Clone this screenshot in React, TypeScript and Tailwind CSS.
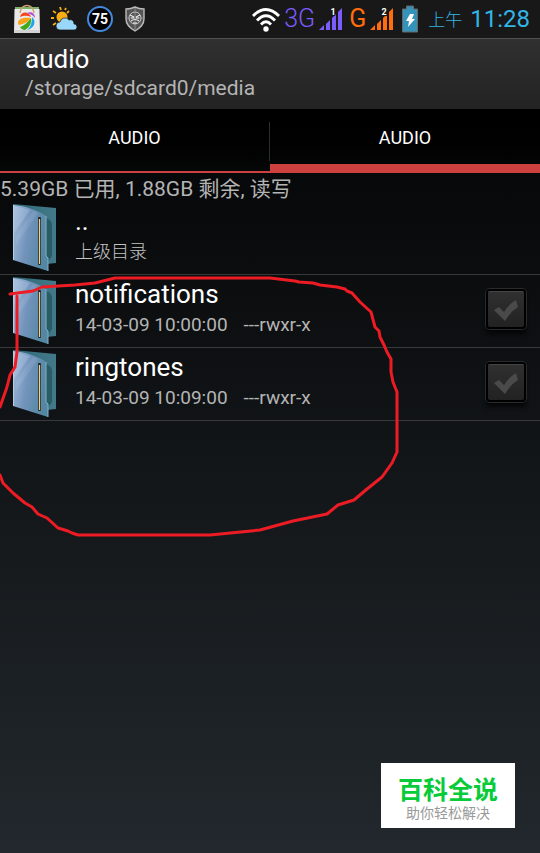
import { useState } from "react";

interface Entry {
	name: string;
	modified: string;
	permissions: string;
}

const entries: Entry[] = [
	{
		name: "notifications",
		modified: "14-03-09 10:00:00",
		permissions: "---rwxr-x",
	},
	{
		name: "ringtones",
		modified: "14-03-09 10:09:00",
		permissions: "---rwxr-x",
	},
];

const tabs = ["AUDIO", "AUDIO"];

function GalleryIcon() {
	return (
		<svg viewBox="0 0 28 30" className="h-[30px] w-7" aria-hidden="true">
			<path d="M2 3h24v4H2z" fill="#79b36b" />
			<path d="M1.500 5h25L27 29H1z" fill="#e9e9e9" />
			<path d="M1 26h26v3H1z" fill="#d2d2d2" />
			<path
				d="M7 9C8-1 20-1 21 9"
				fill="none"
				stroke="#cfa070"
				strokeWidth="1.6"
			/>
			<path d="M7 13c1-6 9-6 11 0-4-2-8-1-11 0z" fill="#f4431e" />
			<path d="M14 9c5-2 8 1 8 5-2-3-5-4-8-5z" fill="#b14ad8" />
			<path d="M5 18c1-4 7-5 13-4-3 4-7 6-12 7-1-1-1-2-1-3z" fill="#fba21b" />
			<path d="M7 23c4-1 8-5 11-9 1 5-2 10-6 12-2 0-4-1-5-3z" fill="#43a91c" />
			<path d="M19 13c5 4 2 12-5 13 4-3 5-8 5-13z" fill="#21a5e9" />
		</svg>
	);
}

function WeatherIcon() {
	return (
		<svg viewBox="0 0 26 24" className="h-6 w-[26px]" aria-hidden="true">
			<path
				d="M9 0l1 3M2 4l3 2M0 11h3M2 18l3-2M18 4l-2 2M15 1l-1 2"
				stroke="#f9ab13"
				strokeWidth="1.8"
			/>
			<circle cx="11" cy="10" r="5.5" fill="#fbad16" />
			<path
				d="M9 23a4 4 0 0 1 0-8 5 5 0 0 1 9-2c3-1 5 1 5 4 4 0 4 6 0 6z"
				fill="#99d8fb"
				stroke="#181818"
				strokeWidth=".7"
			/>
		</svg>
	);
}

function ShieldIcon() {
	return (
		<svg viewBox="0 0 20 26" className="h-[26px] w-5" aria-hidden="true">
			<path
				d="M1 3q5 0 9-2 4 2 9 2v10c0 6-4 9-9 12-5-3-9-6-9-12z"
				fill="#555"
				stroke="#bbb"
				strokeWidth="1.4"
			/>
			<circle cx="10" cy="12" r="6" fill="none" stroke="#ccc" />
			<path d="M10 2v22M2 12h16" stroke="#999" strokeWidth=".8" />
			<path
				d="M5 9l4 2M15 9l-4 2M6 12h3M11 12h3M6 15q4-3 8 0M8 17h4"
				stroke="#eee"
				fill="none"
				strokeWidth="1.2"
			/>
		</svg>
	);
}

function WifiIcon() {
	return (
		<svg viewBox="0 0 28 25" className="h-[25px] w-7" aria-hidden="true">
			<g fill="none" stroke="#fff" strokeWidth="2.8">
				<path d="M1 9Q14-4 27 9" />
				<path d="M5 13.500Q14 4 23 13.500" />
				<path d="M9 17.500Q14 12 19 17.500" />
			</g>
			<circle cx="14" cy="22" r="2.700" fill="#fff" />
		</svg>
	);
}

function SignalIcon({ sim, color }: { sim: string; color: string }) {
	return (
		<svg viewBox="0 0 24 24" className="h-6 w-6" aria-label={`SIM ${sim}`}>
			<path
				d="M0 23l5-5v5zM7 23v-6l4-4v10zM13 23V11l4-4v16zM19 23V5l4-4v22z"
				fill={color}
			/>
			<text
				x="14"
				y="8"
				textAnchor="middle"
				fontSize="9"
				fontWeight="700"
				fill="#fff"
				stroke="#181818"
				strokeWidth="2"
				paintOrder="stroke"
			>
				{sim}
			</text>
		</svg>
	);
}

function BatteryIcon() {
	return (
		<svg viewBox="0 0 16 28" className="h-7 w-4" aria-hidden="true">
			<path
				d="M4.500 1h7v3h4v23h-15V4h4z"
				fill="#3493ba"
				stroke="#666"
				strokeWidth="1"
			/>
			<path d="M8 9h4l-2 5h3l-7 8 1-6H4z" fill="#fff" />
		</svg>
	);
}

function StatusBar() {
	return (
		<div className="flex h-[38px] items-center justify-between bg-[#181818] pr-2.5 pl-[13px]">
			<div className="flex items-center gap-2.5">
				<GalleryIcon />
				<WeatherIcon />
				<span className="flex size-[26px] items-center justify-center rounded-full border-2 border-[#4389dc] bg-black font-bold text-[14px] text-white">
					75
				</span>
				<span className="pl-0.5">
					<ShieldIcon />
				</span>
			</div>
			<div className="flex items-center">
				<WifiIcon />
				<span className="ml-1 font-light text-[#7b5cff] text-[25px] leading-8">
					3G
				</span>
				<span className="ml-1">
					<SignalIcon sim="1" color="#7b5cff" />
				</span>
				<span className="ml-1.5 text-[#ff6d0c] text-[25px] leading-8">G</span>
				<span className="mr-2 ml-1">
					<SignalIcon sim="2" color="#ff6d0c" />
				</span>
				<BatteryIcon />
				<span className="ml-2.5 pt-1 font-light text-[#33b5e5] text-[17px]">
					上午
				</span>
				<span className="ml-2 text-[#33b5e5] text-[24px] leading-8">11:28</span>
			</div>
		</div>
	);
}

function FolderIcon() {
	return (
		<svg
			viewBox="0 0 46 68"
			className="h-[68px] w-[46px] shrink-0"
			aria-hidden="true"
		>
			<defs>
				<linearGradient id="cover" x1="0" x2="1" y1="0" y2=".3">
					<stop offset="0" stopColor="#a5bfdd" />
					<stop offset=".5" stopColor="#7293bb" />
					<stop offset="1" stopColor="#5488a2" />
				</linearGradient>
				<linearGradient id="back" x1="0" x2="1">
					<stop offset="0" stopColor="#2e6873" />
					<stop offset="1" stopColor="#437a8b" />
				</linearGradient>
			</defs>
			<path d="M0 0l43 4v55l-9 1L1 50z" fill="url(#back)" />
			<path d="M33 14q6 2 6 7v31l-4 6-2-2z" fill="#2a5c66" />
			<path d="M0 1c12 1 25 5 33 11v40l2 2v13L0 56z" fill="url(#cover)" />
			<path d="M1 2l16 4L1 29z" fill="#c6d9ef" opacity=".25" />
			<path d="M20 7l5 2L3 41v-9z" fill="#d3e2f3" opacity=".12" />
			<path d="M.5 1v55" fill="none" stroke="#b5cde2" />
			<path d="M33 12v40l2 2v13" fill="none" stroke="#82b0c9" />
			<rect x="25" y="13" width="3" height="48" rx="1" fill="#222a2b" />
			<path d="M26.500 15v45" stroke="#edd298" strokeWidth="1.3" />
		</svg>
	);
}

function EntryCheckbox({ name }: { name: string }) {
	const [checked, setChecked] = useState(false);

	return (
		<label className="relative mr-3.5 mb-1 size-10 shrink-0 rounded-sm border-2 border-black bg-linear-to-b from-[#303030] to-[#222] shadow-[0_0_0_1px_#2a2b2c,0_5px_4px_#050607]">
			<input
				type="checkbox"
				aria-label={`Select ${name}`}
				checked={checked}
				onChange={(e) => setChecked(e.target.checked)}
				className="block size-full cursor-pointer appearance-none rounded-xs border-t border-[#444]"
			/>
			<svg
				viewBox="0 0 36 36"
				className={`pointer-events-none absolute inset-0 size-full ${
					checked ? "text-[#33b5e5]" : "text-[#4a4a4a]"
				}`}
				aria-hidden="true"
			>
				<path
					d="M6 19l5-3 5 5q5-8 12-12l2 7q-7 4-13 14z"
					fill="currentColor"
				/>
			</svg>
		</label>
	);
}

function EntryRow({ entry }: { entry: Entry }) {
	return (
		<li className="flex h-[73px] items-center border-[#37393b] border-b pl-[13px]">
			<FolderIcon />
			<button type="button" className="ml-4 flex-1 pb-1 text-left">
				<span className="block text-[26px] text-white leading-8">
					{entry.name}
				</span>
				<span className="flex gap-4 text-[#b4b4b4] text-[19px] leading-[30px]">
					<span>{entry.modified}</span>
					<span>{entry.permissions}</span>
				</span>
			</button>
			<EntryCheckbox name={entry.name} />
		</li>
	);
}

// Freehand loop drawn around the two directories
function Annotation() {
	return (
		<svg
			viewBox="0 275 400 270"
			className="pointer-events-none absolute top-0 left-0 h-[270px] w-[400px]"
			fill="none"
			stroke="#ed1c24"
			strokeWidth="3"
			strokeLinecap="round"
			strokeLinejoin="round"
			aria-hidden="true"
		>
			<polyline points="10,294 33,291 42,287 75,285 95,283 115,278 270,278 295,281 299,282 313,283 320,285 337,287 345,289 347,291 352,293 360,302 371,312 375,327 379,331 380,337 384,345 387,352 391,359 391,372 393,382 397,392 397,452 392,463 382,477 367,489 354,500 338,505 327,514 293,521 260,530 210,535 78,535 72,533 68,531 58,528 47,518 38,514 32,507 25,503 13,493 3,483 0,475" />
			<polyline points="17,296 17,352 15,367 10,375 7,387 0,407" />
		</svg>
	);
}

export default function App() {
	const [activeTab, setActiveTab] = useState(1);

	return (
		<div className="relative flex min-h-screen flex-col bg-linear-to-b/srgb from-black to-[#22282d] font-[Roboto,'Noto_Sans_CJK_SC',sans-serif]">
			<StatusBar />
			<header className="h-[71px] border-[#505050] border-t bg-linear-to-b from-[#303030] to-[#232323] pt-1 pl-[25px]">
				<h1 className="text-[26px] text-white leading-8">audio</h1>
				<p className="text-[#b4b4b4] text-[21px] leading-[26px]">
					/storage/sdcard0/media
				</p>
			</header>
			<div
				role="tablist"
				className="flex h-16 bg-linear-to-b from-black to-[#070809]"
			>
				{tabs.map((tab, index) => (
					<button
						key={index}
						type="button"
						role="tab"
						aria-selected={activeTab === index}
						onClick={() => setActiveTab(index)}
						className={`flex flex-1 flex-col text-[18px] text-white ${
							activeTab === index
								? "border-[#cc4040] border-b-9"
								: "border-[#cc4040] border-b-2"
						}`}
					>
						<span
							className={`mt-[13px] flex h-[39px] w-full items-start justify-center pt-1 leading-6 ${
								index === 0 ? "border-[#2c2d2e] border-r" : ""
							}`}
						>
							{tab}
						</span>
					</button>
				))}
			</div>
			<p className="pt-1 text-[#b4b4b4] text-[21px] leading-[25px]">
				5.39GB 已用, 1.88GB 剩余, 读写
			</p>
			<main className="flex-1">
				<ul>
					<li className="flex h-[73px] items-center border-[#37393b] border-b pl-[13px]">
						<FolderIcon />
						<button type="button" className="ml-4 flex-1 pb-1 text-left">
							<span className="block text-[26px] text-white leading-8">..</span>
							<span className="block font-light text-[#c4c4c4] text-[18px] leading-[30px]">
								上级目录
							</span>
						</button>
					</li>
				</ul>
				<div className="relative">
					<ul>
						{entries.map((entry) => (
							<EntryRow key={entry.name} entry={entry} />
						))}
					</ul>
					<Annotation />
				</div>
			</main>
			<aside className="absolute right-[25px] bottom-[25px] bg-white px-[17px] pt-3 pb-2 text-center">
				<p className="font-bold text-[#08cb3a] text-[25px] leading-8">
					百科全说
				</p>
				<p className="text-[#999] text-[14px] leading-[13px]">助你轻松解决</p>
			</aside>
		</div>
	);
}
